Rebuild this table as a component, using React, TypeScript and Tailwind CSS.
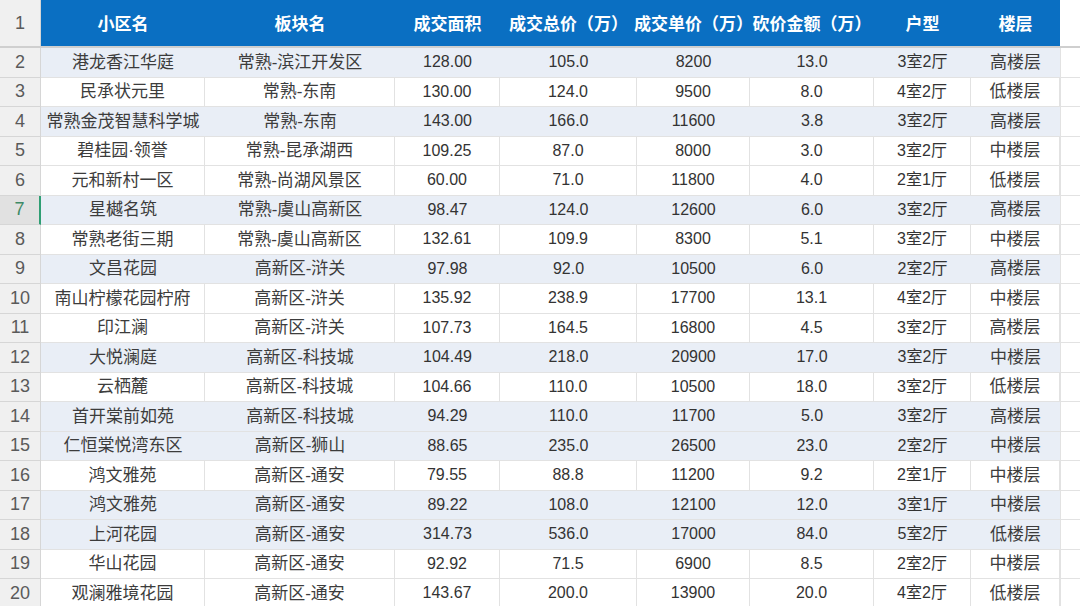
import React from 'react';

const cols = 'grid grid-cols-[41px_164px_190px_105px_137px_113px_124px_97px_89px_1fr]';

const headers = ['小区名', '板块名', '成交面积', '成交总价（万）', '成交单价（万）', '砍价金额（万）', '户型', '楼层'];

type Row = {
    n: number;
    name: string;
    area: string;
    size: string;
    total: string;
    unit: string;
    cut: string;
    layout: string;
    floor: string;
    shaded?: boolean;
};

const rows: Row[] = [
    { n: 2, name: '港龙香江华庭', area: '常熟-滨江开发区', size: '128.00', total: '105.0', unit: '8200', cut: '13.0', layout: '3室2厅', floor: '高楼层', shaded: true },
    { n: 3, name: '民承状元里', area: '常熟-东南', size: '130.00', total: '124.0', unit: '9500', cut: '8.0', layout: '4室2厅', floor: '低楼层' },
    { n: 4, name: '常熟金茂智慧科学城', area: '常熟-东南', size: '143.00', total: '166.0', unit: '11600', cut: '3.8', layout: '3室2厅', floor: '高楼层', shaded: true },
    { n: 5, name: '碧桂园·领誉', area: '常熟-昆承湖西', size: '109.25', total: '87.0', unit: '8000', cut: '3.0', layout: '3室2厅', floor: '中楼层' },
    { n: 6, name: '元和新村一区', area: '常熟-尚湖风景区', size: '60.00', total: '71.0', unit: '11800', cut: '4.0', layout: '2室1厅', floor: '低楼层' },
    { n: 7, name: '星樾名筑', area: '常熟-虞山高新区', size: '98.47', total: '124.0', unit: '12600', cut: '6.0', layout: '3室2厅', floor: '高楼层', shaded: true },
    { n: 8, name: '常熟老街三期', area: '常熟-虞山高新区', size: '132.61', total: '109.9', unit: '8300', cut: '5.1', layout: '3室2厅', floor: '中楼层' },
    { n: 9, name: '文昌花园', area: '高新区-浒关', size: '97.98', total: '92.0', unit: '10500', cut: '6.0', layout: '2室2厅', floor: '高楼层', shaded: true },
    { n: 10, name: '南山柠檬花园柠府', area: '高新区-浒关', size: '135.92', total: '238.9', unit: '17700', cut: '13.1', layout: '4室2厅', floor: '中楼层' },
    { n: 11, name: '印江澜', area: '高新区-浒关', size: '107.73', total: '164.5', unit: '16800', cut: '4.5', layout: '3室2厅', floor: '高楼层' },
    { n: 12, name: '大悦澜庭', area: '高新区-科技城', size: '104.49', total: '218.0', unit: '20900', cut: '17.0', layout: '3室2厅', floor: '中楼层', shaded: true },
    { n: 13, name: '云栖麓', area: '高新区-科技城', size: '104.66', total: '110.0', unit: '10500', cut: '18.0', layout: '3室2厅', floor: '低楼层' },
    { n: 14, name: '首开棠前如苑', area: '高新区-科技城', size: '94.29', total: '110.0', unit: '11700', cut: '5.0', layout: '3室2厅', floor: '高楼层', shaded: true },
    { n: 15, name: '仁恒棠悦湾东区', area: '高新区-狮山', size: '88.65', total: '235.0', unit: '26500', cut: '23.0', layout: '2室2厅', floor: '中楼层', shaded: true },
    { n: 16, name: '鸿文雅苑', area: '高新区-通安', size: '79.55', total: '88.8', unit: '11200', cut: '9.2', layout: '2室1厅', floor: '中楼层' },
    { n: 17, name: '鸿文雅苑', area: '高新区-通安', size: '89.22', total: '108.0', unit: '12100', cut: '12.0', layout: '3室1厅', floor: '中楼层', shaded: true },
    { n: 18, name: '上河花园', area: '高新区-通安', size: '314.73', total: '536.0', unit: '17000', cut: '84.0', layout: '5室2厅', floor: '低楼层', shaded: true },
    { n: 19, name: '华山花园', area: '高新区-通安', size: '92.92', total: '71.5', unit: '6900', cut: '8.5', layout: '2室2厅', floor: '中楼层' },
    { n: 20, name: '观澜雅境花园', area: '高新区-通安', size: '143.67', total: '200.0', unit: '13900', cut: '20.0', layout: '4室2厅', floor: '低楼层' }
];

// Chinese cells: Latin bits (hyphen, middle dot) come from Liberation Sans
const cjk = "font-['Liberation_Sans','Noto_Sans_CJK_SC',sans-serif] text-[17px] text-[#3c3c3c]";
const num = "font-['Liberation_Sans','Noto_Sans_CJK_SC',sans-serif] text-[16px] text-[#333333]";

function Cell({ children, shaded, font }: { children: React.ReactNode; shaded?: boolean; font: string }) {
    return (
        <div
            className={`flex items-center justify-center whitespace-nowrap border-b border-[#e2e2e2] ${
                shaded ? 'bg-[#e9eef6]' : 'border-r bg-white'
            } ${font}`}
        >
            {children}
        </div>
    );
}

export default function App() {
    return (
        <div className="w-[1080px] h-[606px] overflow-hidden bg-white">
            {/* header row */}
            <div className={`${cols} h-[48px] border-b-2 border-[#cfcfcf]`}>
                <div className="flex items-center justify-center bg-[#f0f0f0] border-r border-[#d6d6d6] font-['Liberation_Sans',sans-serif] text-[18px] text-[#5a5a5a]">
                    1
                </div>
                {headers.map((h) => (
                    <div
                        key={h}
                        className="flex items-center justify-center whitespace-nowrap bg-[#0a6fc2] font-['Noto_Sans_CJK_SC',sans-serif] font-bold text-[17px] text-white"
                    >
                        {h}
                    </div>
                ))}
                <div className="bg-white" />
            </div>

            {rows.map((r) => {
                const selected = r.n === 7;
                return (
                    <div key={r.n} className={`${cols} h-[29.5px]`}>
                        <div
                            className={`flex items-center justify-center border-b font-['Liberation_Sans',sans-serif] text-[18px] ${
                                selected
                                    ? 'bg-[#e1e1e1] border-[#d6d6d6] border-r-2 border-r-[#2f9e73] text-[#3d8a66]'
                                    : 'bg-[#f0f0f0] border-[#d6d6d6] border-r text-[#5a5a5a]'
                            }`}
                        >
                            {r.n}
                        </div>
                        <Cell shaded={r.shaded} font={cjk}>{r.name}</Cell>
                        <Cell shaded={r.shaded} font={cjk}>{r.area}</Cell>
                        <Cell shaded={r.shaded} font={num}>{r.size}</Cell>
                        <Cell shaded={r.shaded} font={num}>{r.total}</Cell>
                        <Cell shaded={r.shaded} font={num}>{r.unit}</Cell>
                        <Cell shaded={r.shaded} font={num}>{r.cut}</Cell>
                        <Cell shaded={r.shaded} font={num}>{r.layout}</Cell>
                        <Cell shaded={r.shaded} font={cjk}>{r.floor}</Cell>
                        <div className="border-b border-l border-[#e2e2e2] bg-white" />
                    </div>
                );
            })}
        </div>
    );
}
